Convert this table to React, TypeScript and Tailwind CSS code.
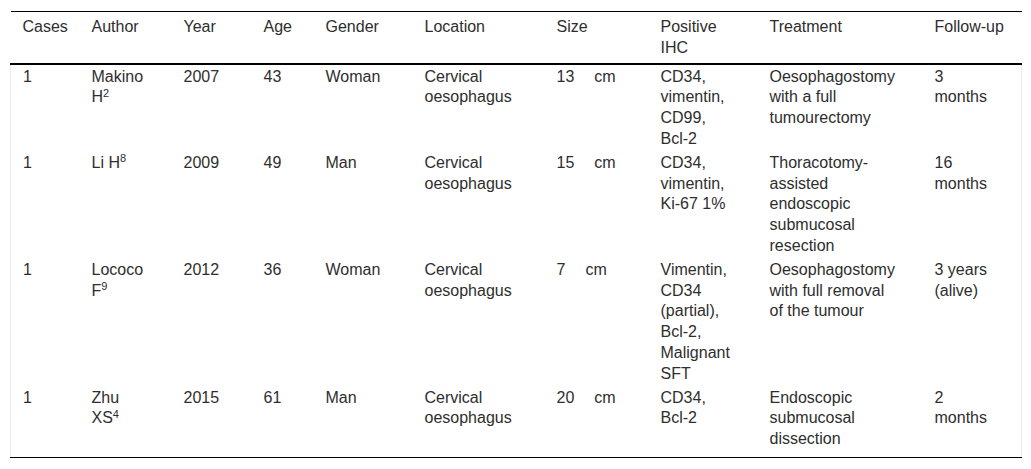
import React from "react";

type Cell = React.ReactNode[];

const Sup = ({ children }: { children: React.ReactNode }) => (
  <sup className="text-[11px]">{children}</sup>
);

const Size = ({ n }: { n: string }) => (
  <>
    {n}
    <span className="ml-[20px]">cm</span>
  </>
);

const cols = [69, 92, 80, 62, 99, 132, 104, 109, 165, 99];
const colClass = [
  "w-[69px]",
  "w-[92px]",
  "w-[80px]",
  "w-[62px]",
  "w-[99px]",
  "w-[132px]",
  "w-[104px]",
  "w-[109px]",
  "w-[165px]",
  "w-[99px]",
];

const header: Cell[] = [
  ["Cases"],
  ["Author"],
  ["Year"],
  ["Age"],
  ["Gender"],
  ["Location"],
  ["Size"],
  ["Positive", "IHC"],
  ["Treatment"],
  ["Follow-up"],
];

const rows: Cell[][] = [
  [
    ["1"],
    ["Makino", <>H<Sup>2</Sup></>],
    ["2007"],
    ["43"],
    ["Woman"],
    ["Cervical", "oesophagus"],
    [<Size n="13" />],
    ["CD34,", "vimentin,", "CD99,", "Bcl-2"],
    ["Oesophagostomy", "with a full", "tumourectomy"],
    ["3", "months"],
  ],
  [
    ["1"],
    [<>Li H<Sup>8</Sup></>],
    ["2009"],
    ["49"],
    ["Man"],
    ["Cervical", "oesophagus"],
    [<Size n="15" />],
    ["CD34,", "vimentin,", "Ki-67 1%"],
    ["Thoracotomy-", "assisted", "endoscopic", "submucosal", "resection"],
    ["16", "months"],
  ],
  [
    ["1"],
    ["Lococo", <>F<Sup>9</Sup></>],
    ["2012"],
    ["36"],
    ["Woman"],
    ["Cervical", "oesophagus"],
    [<Size n="7" />],
    ["Vimentin,", "CD34", "(partial),", "Bcl-2,", "Malignant", "SFT"],
    ["Oesophagostomy", "with full removal", "of the tumour"],
    ["3 years", "(alive)"],
  ],
  [
    ["1"],
    ["Zhu", <>XS<Sup>4</Sup></>],
    ["2015"],
    ["61"],
    ["Man"],
    ["Cervical", "oesophagus"],
    [<Size n="20" />],
    ["CD34,", "Bcl-2"],
    ["Endoscopic", "submucosal", "dissection"],
    ["2", "months"],
  ],
];

function Lines({ lines }: { lines: Cell }) {
  return (
    <>
      {lines.map((l, i) => (
        <div key={i} className="whitespace-nowrap">
          {l}
        </div>
      ))}
    </>
  );
}

export default function App() {
  return (
    <div className="w-[1031px] h-[469px] bg-white pt-[11px] px-[10px] font-['Liberation_Sans',Arial,sans-serif] text-[16px] leading-[20.8px] text-[#2e2e2e]">
      <table className="table-fixed border-collapse w-[1011px]">
        <colgroup>
          {cols.map((_, i) => (
            <col key={i} className={colClass[i]} />
          ))}
        </colgroup>
        <thead>
          <tr className="border-t border-b-2 border-black">
            {header.map((c, i) => (
              <th key={i} className="text-left font-normal align-top pl-[12px] pt-[5px] pb-[4px]">
                <Lines lines={c} />
              </th>
            ))}
          </tr>
        </thead>
        <tbody className="border-x border-[#ebebeb]">
          {rows.map((r, ri) => (
            <tr
              key={ri}
              className={ri === rows.length - 1 ? "border-b border-black" : ""}
            >
              {r.map((c, ci) => (
                <td
                  key={ci}
                  className={
                    "align-top pl-[12px] pt-[2px] " +
                    (ri === rows.length - 1 ? "pb-[7px]" : "pb-[1px]")
                  }
                >
                  <Lines lines={c} />
                </td>
              ))}
            </tr>
          ))}
        </tbody>
      </table>
    </div>
  );
}
